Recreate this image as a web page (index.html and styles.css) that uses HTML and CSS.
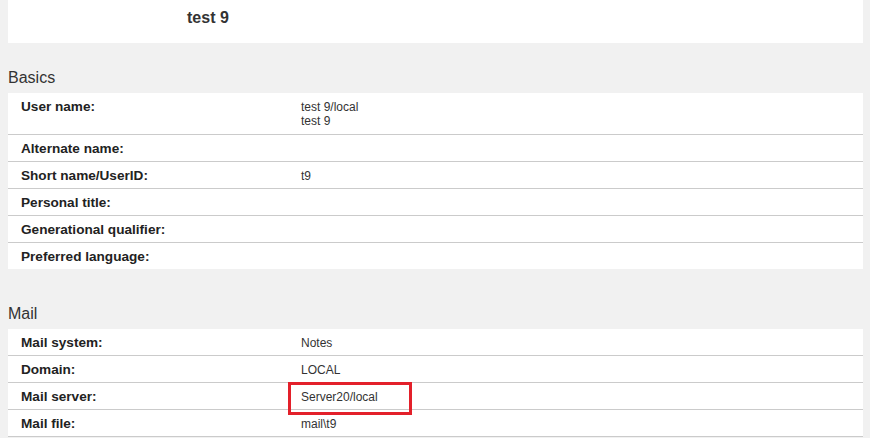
FILE: index.html
```html
<!DOCTYPE html>
<html>
<head>
<meta charset="utf-8">
<link rel="stylesheet" href="styles.css">
</head>
<body>
<div class="page">
  <div class="top"><h1 class="title">test 9</h1></div>

  <h2 class="section-title first">Basics</h2>
  <div class="panel">
    <div class="row tall"><div class="label">User name:</div><div class="value">test 9/local<br>test 9</div></div>
    <div class="row"><div class="label">Alternate name:</div><div class="value"></div></div>
    <div class="row"><div class="label">Short name/UserID:</div><div class="value">t9</div></div>
    <div class="row"><div class="label">Personal title:</div><div class="value"></div></div>
    <div class="row"><div class="label">Generational qualifier:</div><div class="value"></div></div>
    <div class="row last"><div class="label">Preferred language:</div><div class="value"></div></div>
  </div>

  <h2 class="section-title second">Mail</h2>
  <div class="panel">
    <div class="row"><div class="label">Mail system:</div><div class="value">Notes</div></div>
    <div class="row"><div class="label">Domain:</div><div class="value">LOCAL</div></div>
    <div class="row"><div class="label">Mail server:</div><div class="value flagged">Server20/local<span class="highlight"></span></div></div>
    <div class="row"><div class="label">Mail file:</div><div class="value">mail\t9</div></div>
  </div>
</div>
</body>
</html>
```

FILE: styles.css
```css
html, body {
  margin: 0;
  padding: 0;
}
body {
  background: #f1f1f1;
  font-family: "Liberation Sans", Arial, sans-serif;
  color: #222;
}
.page {
  padding: 0 7px 0 8px;
}
.top {
  background: #fff;
  height: 43px;
  box-sizing: border-box;
  padding: 9px 0 0 179px;
}
.title {
  margin: 0;
  font-size: 16px;
  line-height: 18px;
  font-weight: bold;
  color: #333;
}
.section-title {
  margin: 0;
  font-size: 16px;
  font-weight: normal;
  line-height: 18px;
  color: #333;
  padding-bottom: 6px;
}
.section-title.first {
  padding-top: 26px;
}
.section-title.second {
  padding-top: 36px;
  padding-bottom: 6px;
}
.panel {
  background: #fff;
}
.row {
  display: grid;
  grid-template-columns: 280px 1fr;
  padding: 7px 0 5px 13px;
  border-bottom: 1px solid #cbcbcb;
  line-height: 14px;
}
.row.tall {
  padding-bottom: 6px;
}
.row.last {
  border-bottom: none;
}
.label {
  font-size: 13.6px;
  font-weight: bold;
  color: #222;
}
.value {
  font-size: 12px;
  color: #333;
}
.flagged {
  position: relative;
}
.highlight {
  position: absolute;
  left: -13px;
  top: -8px;
  width: 124px;
  height: 33px;
  box-sizing: border-box;
  border: 3px solid #e3202a;
}
```
